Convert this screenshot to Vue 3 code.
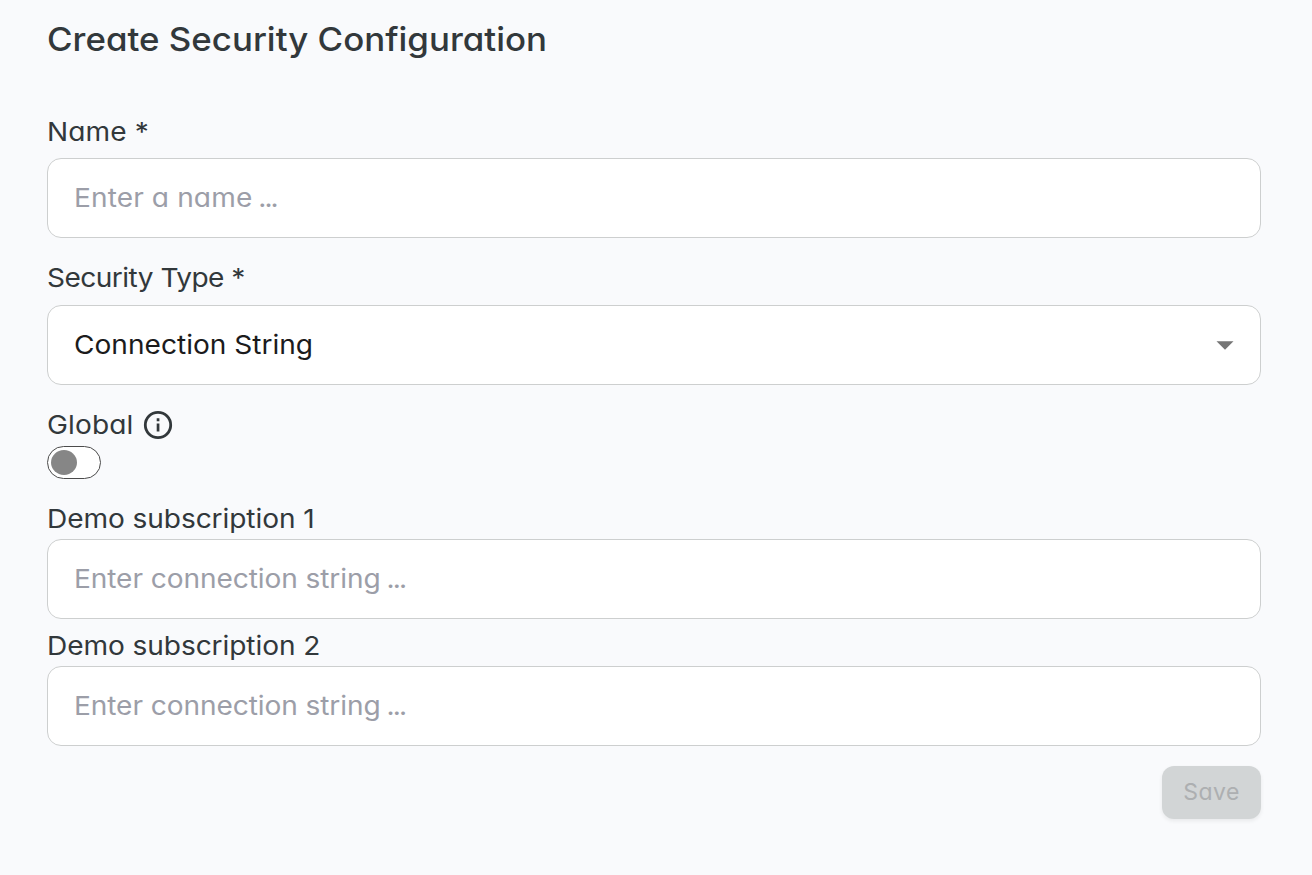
<script setup>
const subscriptions = ['Demo subscription 1', 'Demo subscription 2']
</script>

<template>
  <main class="page">
    <h1 class="title"><span class="text">Create Security Configuration</span></h1>
    <form class="form" @submit.prevent>
      <div class="label name-label"><span class="text">Name *</span></div>
      <div class="field name-field" role="textbox" aria-label="Name">
        <span class="text placeholder">Enter a name<span class="dots"> ...</span></span>
      </div>

      <div class="label type-label"><span class="text">Security Type *</span></div>
      <div class="field select" role="combobox" aria-label="Security Type">
        <span class="text">Connection String</span>
        <svg class="arrow" width="18" height="9" viewBox="0 0 18 9"><path d="M0.5 0.2h17L9 8.8z" fill="#757575" /></svg>
      </div>

      <div class="label global-label">
        <span class="text">Global</span>
        <svg class="info" width="30" height="30" viewBox="0 0 30 30">
          <circle cx="15" cy="15" r="12.7" fill="none" stroke="#32383b" stroke-width="2.8" />
          <path d="M13.7 13.5h2.7v8h-2.7zM13.7 8.3h2.7v2.9h-2.7z" fill="#32383b" />
        </svg>
      </div>
      <button type="button" class="toggle" aria-label="Global"><i class="knob"></i></button>

      <div v-for="item in subscriptions" :key="item" class="subscription">
        <div class="label"><span class="text">{{ item }}</span></div>
        <div class="field" role="textbox" :aria-label="item">
          <span class="text placeholder">Enter connection string<span class="dots"> ...</span></span>
        </div>
      </div>

      <button class="save" disabled><span>Save</span></button>
    </form>
  </main>
</template>

<style>
html, body { margin: 0; background: #f9fafc; }
</style>

<style scoped>
.page {
  box-sizing: border-box;
  min-height: 875px;
  padding: 19px 51px 0 47px;
  background: #f9fafc;
  color: #32383b;
  font-family: Inter, "Open Sans", sans-serif;
  font-feature-settings: "cv11";
}
.text {
  display: inline-block;
  transform: scaleX(1.08);
  transform-origin: 0 50%;
  white-space: pre;
}
.title {
  margin: 0 0 56px;
  font-size: 33px;
  line-height: 40px;
  font-weight: 500;
  letter-spacing: 0;
}
.title .text { transform: scaleX(1.057); }
.form { display: flex; flex-direction: column; }
.label, .field {
  display: flex;
  align-items: center;
  font-size: 26px;
  font-weight: 400;
  line-height: 34px;
  letter-spacing: -0.08px;
}
.label { height: 34px; }
.field {
  box-sizing: border-box;
  height: 80px;
  padding: 0 26px 0 27px;
  border: 1px solid #cdcfcf;
  border-radius: 14px;
  background: #fff;
  color: #1b1b1c;
}
.field .text { margin-left: -1px; }
.placeholder { color: #9c9ea8; }
.dots { letter-spacing: -1.8px; }
.name-field { letter-spacing: 0.1px; }
.name-label { margin-bottom: 9px; letter-spacing: 0.1px; }
.type-label { margin: 23px 0 10px; letter-spacing: -0.5px; }
.select { justify-content: space-between; }
.select .text { letter-spacing: 0; }
.global-label { margin: 23px 0 4px; letter-spacing: 0.1px; }
.info { margin-left: 15.5px; }
.toggle {
  box-sizing: border-box;
  display: flex;
  align-items: center;
  width: 54px;
  height: 33px;
  margin-bottom: 23px;
  padding: 0 0 0 3px;
  border: 1px solid #4b4b4b;
  border-radius: 17px;
  background: #fff;
}
.knob { width: 26px; height: 25px; border-radius: 50%; background: #868686; }
.subscription { display: flex; flex-direction: column; gap: 3px; }
.subscription + .subscription { margin-top: 10px; }
.save {
  align-self: flex-end;
  width: 99px;
  height: 53px;
  margin-top: 20px;
  padding: 0 0 2px;
  border: 0;
  border-radius: 12px;
  background: #d2d5d6;
  box-shadow: 0 2px 4px rgba(0, 0, 0, 0.07);
  color: #adafb1;
  font: 400 23px/34px Inter, "Open Sans", sans-serif;
  font-feature-settings: "cv11";
  letter-spacing: 0.5px;
}
</style>
